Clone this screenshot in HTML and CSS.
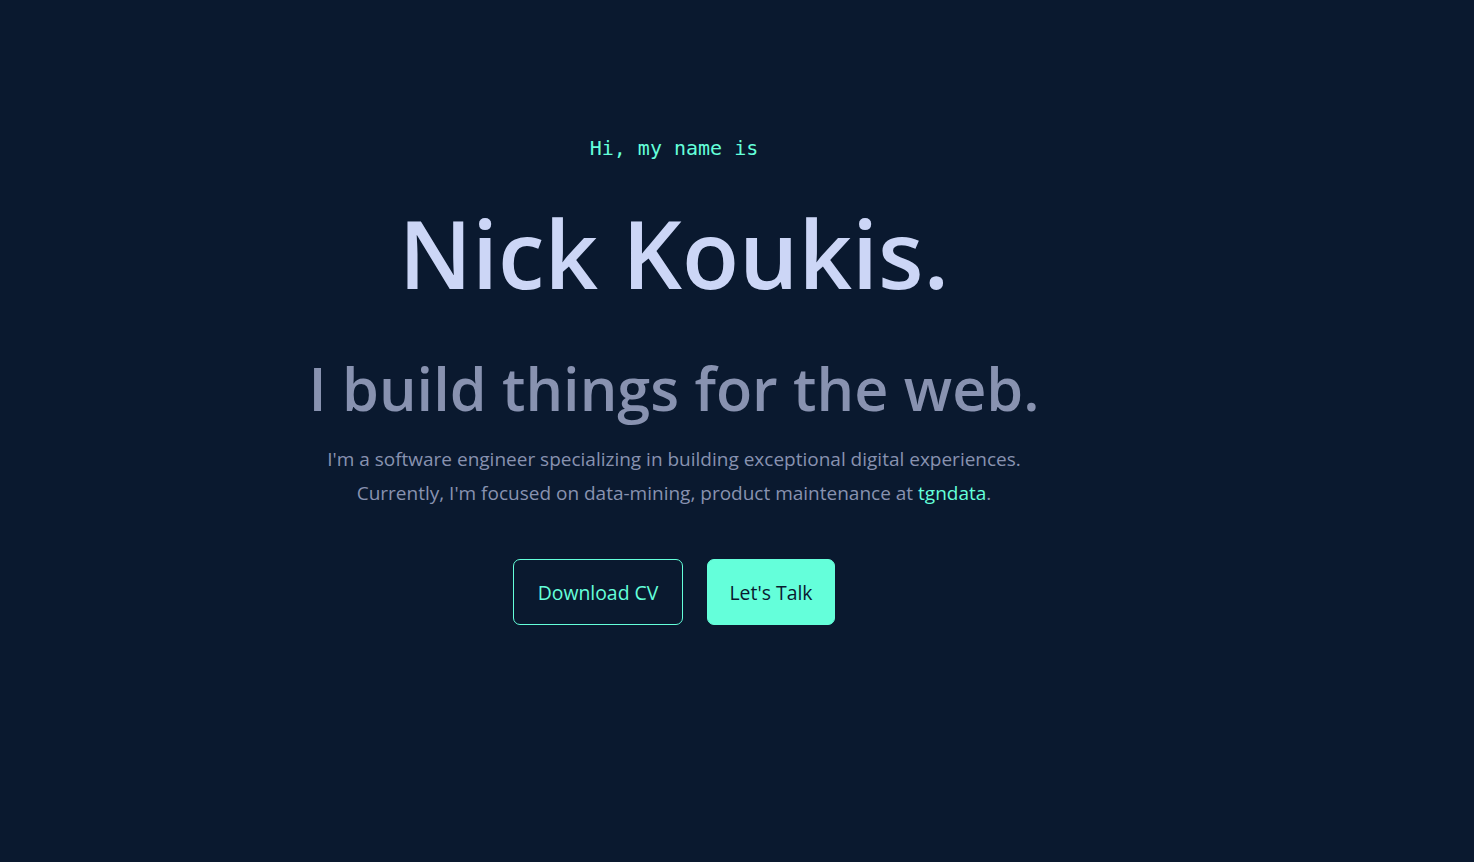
FILE: index.html
```html
<!DOCTYPE html>
<html lang="en">
<head>
<meta charset="utf-8">
<title>Nick Koukis</title>
<link rel="stylesheet" href="styles.css">
</head>
<body>
<main class="page">
  <section class="hero">
    <p class="hello">Hi, my name is</p>
    <h1 class="name">Nick Koukis.</h1>
    <h2 class="tagline">I build things for the web.</h2>
    <p class="intro">I'm a software engineer specializing in building exceptional digital experiences.<br>Currently, I'm focused on data-mining, product maintenance at <a class="link" href="#">tgndata</a>.</p>
    <div class="actions">
      <a class="btn btn-outline" href="#">Download CV</a>
      <a class="btn btn-solid" href="#">Let's Talk</a>
    </div>
  </section>
</main>
</body>
</html>
```

FILE: styles.css
```css
* { box-sizing: border-box; }
html, body { margin: 0; padding: 0; }
body {
  background: #0a192f;
  color: #8892b0;
  font-family: "Open Sans", "Noto Sans", sans-serif;
  height: 862px;
  overflow: hidden;
}
.page {
  width: 1348px;
}
.hero {
  display: flex;
  flex-direction: column;
  align-items: center;
  text-align: center;
  padding-top: 134px;
}
.hello {
  margin: 0;
  font-family: "DejaVu Sans Mono", monospace;
  font-size: 20px;
  line-height: 28px;
  color: #64ffda;
}
.name {
  margin: 36px 0 0;
  font-size: 93.5px;
  font-weight: 600;
  line-height: 110px;
  color: #ccd6f6;
}
.tagline {
  margin: 40px 0 0;
  font-size: 59.3px;
  font-weight: 600;
  line-height: 80px;
  color: #8892b0;
}
.intro {
  margin: 14px 0 0;
  font-size: 19px;
  line-height: 34px;
  color: #8892b0;
}
.link {
  color: #64ffda;
  text-decoration: none;
}
.actions {
  display: flex;
  gap: 24px;
  margin-top: 49px;
}
.btn {
  display: flex;
  align-items: center;
  justify-content: center;
  height: 66px;
  border-radius: 7px;
  font-size: 19.4px;
  text-decoration: none;
  border: 1px solid #64ffda;
}
.btn-outline {
  width: 170px;
  color: #64ffda;
  background: transparent;
}
.btn-solid {
  width: 128px;
  color: #0a192f;
  background: #64ffda;
}
```
